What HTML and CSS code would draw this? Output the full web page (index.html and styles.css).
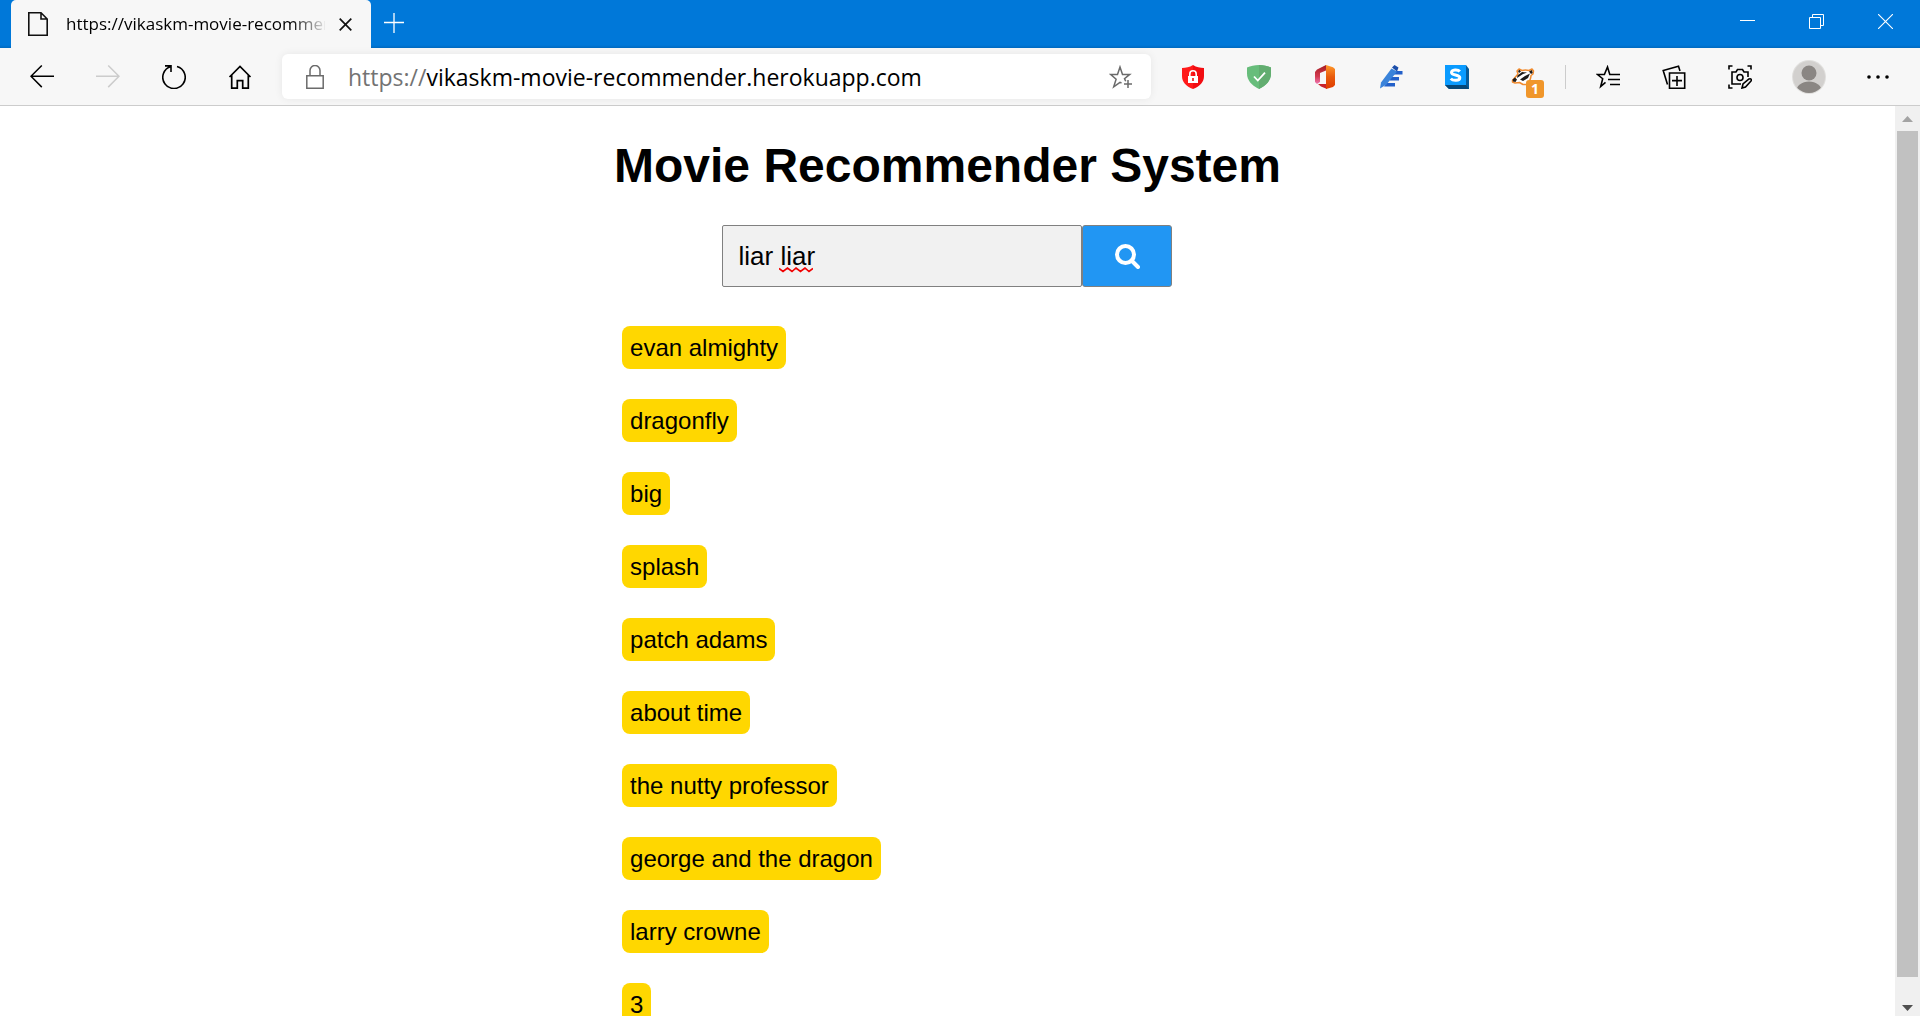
FILE: index.html
```html
<!DOCTYPE html>
<html lang="en">
<head>
<meta charset="utf-8">
<title>Movie Recommender System</title>
<link rel="stylesheet" href="styles.css">
</head>
<body>
<header class="titlebar">
  <div class="tab">
    <svg class="tab-icon" width="20" height="24" viewBox="0 0 20 24" fill="none" stroke="#111" stroke-width="1.6"><path d="M.8.8H13l6.2 6.2v16.2H.8zM13 .8V7h6.2"/></svg>
    <span class="tab-title">https://vikaskm-movie-recommender.herokuapp.com</span>
    <button class="tab-close" aria-label="Close tab"><svg width="13" height="13" viewBox="0 0 13 13" stroke="#111" stroke-width="1.7"><path d="M.7.7l11.6 11.6M12.3.7L.7 12.3"/></svg></button>
  </div>
  <button class="new-tab" aria-label="New tab"><svg width="20" height="20" viewBox="0 0 20 20" stroke="#fff" stroke-width="1.3"><path d="M0 9.5h20M10 0v20"/></svg></button>
  <div class="window-controls">
    <button aria-label="Minimize"><svg width="15" height="15" viewBox="0 0 15 15" stroke="#fff"><path d="M0 6.5h15"/></svg></button>
    <button aria-label="Restore"><svg width="15" height="15" viewBox="0 0 15 15" fill="none" stroke="#fff"><path d="M.5 3.500h11v11H.5zM3.500 3.500v-3h11v11h-3"/></svg></button>
    <button aria-label="Close window"><svg width="15" height="15" viewBox="0 0 15 15" stroke="#fff" stroke-width="1.1"><path d="M0 0l15 15M15 0L0 15"/></svg></button>
  </div>
</header>
<nav class="toolbar" aria-label="Browser">
  <button class="tool" aria-label="Back"><svg width="24" height="24" viewBox="0 0 24 24" fill="none" stroke="#000" stroke-width="1.5"><path d="M1 11.300h23M11.800.5L1 11.300l10.800 10.800"/></svg></button>
  <button class="tool" aria-label="Forward" disabled><svg width="24" height="24" viewBox="0 0 24 24" fill="none" stroke="#ccc" stroke-width="1.500"><path d="M0 11.300h23M12.200.5L23 11.300 12.200 22.100"/></svg></button>
  <button class="tool" aria-label="Reload"><svg width="24" height="24" viewBox="0 0 24 24" fill="none" stroke="#000" stroke-width="1.600"><path d="M15 1.500A11.200 11.200 0 1 1 9 1.500M3 .9h6v6"/></svg></button>
  <button class="tool" aria-label="Home"><svg width="24" height="24" viewBox="0 0 24 24" fill="none" stroke="#000" stroke-width="1.700"><path d="M1.500 12L12 1.500 22.500 12M3.700 10v13.200h5.600v-7.500h5.400v7.500h5.600V10"/></svg></button>
  <div class="address">
    <svg width="18" height="24" viewBox="0 0 18 24" fill="none" stroke="#6b6b6b" stroke-width="1.500"><path d="M.8 10.800h16.400v12.400H.8zM4 10.800V5.500a5 5 0 0 1 10 0v5.300"/></svg>
    <label class="scheme" for="url">https://</label><input id="url" class="url" type="text" value="vikaskm-movie-recommender.herokuapp.com" spellcheck="false">
    <button class="favorite" aria-label="Add to favorites"><svg width="24" height="24" viewBox="0 0 24 24" fill="none" stroke="#6b6b6b" stroke-width="1.500"><path d="M12.500 18L11 17.300l-6.300 4.500 2.400-7.600L1.500 9.400h7L11 2l2.500 7.400h7.200l-5.200 4.200 1.200 2.600M19 15v8M15 19h8"/></svg></button>
  </div>
  <button class="tool" aria-label="Ad blocker"><svg width="24" height="24" viewBox="0 0 24 24"><path fill="#f20d12" d="M12 0c3.500 2.200 7 3 11 3v8c0 6-4 10.500-11 13z"/><path fill="#ff1a1a" d="M12 0C8.500 2.200 5 3 1 3v8c0 6 4 10.500 11 13z"/><rect x="7" y="11" width="10" height="7" fill="#fff"/><path d="M8.800 11V9a3.200 3.200 0 0 1 6.400 0v2" fill="none" stroke="#fff" stroke-width="1.600"/><path d="M12 13v3" stroke="#e11" stroke-width="1.600"/></svg></button>
  <button class="tool" aria-label="Site safety"><svg width="24" height="24" viewBox="0 0 24 24"><path fill="#67bd7b" d="M12 0c4.500 0 8.500 1 12 2.500v6C24 15 19.500 20.500 12 24 4.500 20.500 0 15 0 8.500v-6C3.500 1 7.500 0 12 0z"/><path fill="#62ad70" d="M12 0c4.500 0 8.500 1 12 2.500v6C24 15 19.500 20.500 12 24z"/><path d="M7 11.500l3.800 4L18 7.700" fill="none" stroke="#fff" stroke-width="1.800"/></svg></button>
  <button class="tool" aria-label="Office"><svg width="24" height="24" viewBox="0 0 24 24"><defs><linearGradient id="office-left" x2="0" y2="1"><stop stop-color="#a51d23"/><stop offset=".6" stop-color="#d33a50"/><stop offset="1" stop-color="#ef78b4"/></linearGradient><linearGradient id="office-right" x2="0" y2="1"><stop stop-color="#ff9a2b"/><stop offset=".5" stop-color="#e85a0c"/><stop offset="1" stop-color="#df3b00"/></linearGradient></defs><path fill="url(#office-left)" d="M13 0L4 4.500 2 7v10l2 2 3-2V8l6-2.500z"/><path fill="#c8232c" d="M5 19h9v5L8 21.500z"/><path fill="url(#office-right)" d="M13 0l7 2.200L22 4v16l-2 2-7 2z"/></svg></button>
  <button class="tool" aria-label="Editor"><svg width="24" height="24" viewBox="0 0 24 24"><path fill="#2360c9" d="M14 6h9.500v3.500H13zM11 12h9v3.500h-9zM8 18h8v3.500H5z"/><path fill="#3a83da" d="M12.500 3.500l5.500 3L7.500 19.500l-6.500 4 1-6z"/><path fill="#1b4eaa" d="M13 2.500L15.500 0 19.500 2.500 18 6.500z"/></svg></button>
  <button class="tool" aria-label="Shopping assistant"><svg width="24" height="24" viewBox="0 0 24 24"><path fill="#075b99" d="M21 0l3 4v20H4l-4-4z"/><path fill="#064777" d="M0 20h21l3 4H4z"/><path fill="#0a9bff" d="M0 0h21v20H0z"/><path d="M14.800 6.500C13 4.200 6.500 4.300 6.500 7.500s8.300 1.800 8.300 5.200-7 3.300-9 .9" fill="none" stroke="#fff" stroke-width="3"/></svg></button>
  <button class="tool badger" aria-label="Tracker blocker"><svg width="24" height="24" viewBox="0 0 24 24"><path fill="#fff" stroke="#f18b2e" stroke-width="1.500" stroke-linejoin="round" d="M1.500 15.500L7 9 6 6l2-2 3 1.500c3-.8 5-.5 7 0L21 4l1.500 2L22 9l-2 1.500c0 3-1.500 6-3 9h-5l-3.500-2-4.500.5-2.500-1z"/><path fill="#1d1b19" d="M1.500 14.500L4 12.500l2 2-1.500 2.500-2.500-.5zM6.500 10.500L11 7l5 .5-4 1.500-6 4zM9 14.500l5-3.500 5-2.500-2 4.500-5 3zM7 6l1.500-1.200L10 6.500 8 8zM18 6.500L21 5l.7 3-1.700 1z"/></svg><span class="badge">1</span></button>
  <span class="divider"></span>
  <button class="tool" aria-label="Favorites"><svg width="24" height="24" viewBox="0 0 24 24" fill="none" stroke="#000" stroke-width="1.600"><path d="M9.500 17.300L4.700 21.500l2-7.800L1.500 9.500h6.900L11.500 2l2.300 7.500H24M12 14.500h12M14 19.500h10"/></svg></button>
  <button class="tool" aria-label="Collections"><svg width="24" height="24" viewBox="0 0 24 24" fill="none" stroke="#000" stroke-width="1.600"><path d="M7.500 8h15.200v15.200H7.500zM15 11v10M10 15.600h10M5.500 19.500L1.200 5.500 16.500 1.200 18 6"/></svg></button>
  <button class="tool" aria-label="Web capture"><svg width="24" height="24" viewBox="0 0 24 24" fill="none" stroke="#000" stroke-width="1.600"><path d="M1 4.500V1h3.500M19.500 1H23v3.500M4.500 23H1v-3.500M13 19H4V7h4l1.500-2.500h5L16 7h4v5"/><circle cx="12" cy="12.500" r="3"/><path d="M14 23l1-4 6-5c2-1 3 1 2 2l-5.500 6z"/></svg></button>
  <button class="tool profile" aria-label="Profile"><svg width="34" height="34" viewBox="0 0 34 34"><clipPath id="avatar-clip"><circle cx="17" cy="17" r="16"/></clipPath><circle cx="17" cy="17" r="17" fill="#e0dfdd"/><circle cx="17" cy="17" r="16" fill="#d2d0ce"/><g fill="#8a8683" clip-path="url(#avatar-clip)"><circle cx="17" cy="13" r="7.500"/><ellipse cx="17" cy="32" rx="13" ry="10.500"/></g></svg></button>
  <button class="tool" aria-label="Settings and more"><svg width="24" height="24" viewBox="0 0 24 24"><circle cx="3" cy="12" r="1.800"/><circle cx="12" cy="12" r="1.800"/><circle cx="21" cy="12" r="1.800"/></svg></button>
</nav>
<div class="viewport">
  <main class="page">
    <div class="column">
      <h1>Movie Recommender System</h1>
      <form class="search">
        <input class="query" type="text" value="liar liar" aria-label="Movie name" spellcheck="false">
        <svg class="squiggle" width="34" height="6" viewBox="0 0 34 6" fill="none" stroke="#f00000" stroke-width="1.600"><path d="M0 1.500l4 3 4.500-3.500 4.500 3.500L17 1l4.500 3.500L26 1l4 3.500 4-3"/></svg>
        <button class="submit" type="button" aria-label="Search"><svg width="25" height="25" viewBox="0 0 25 25" fill="none" stroke="#fff" stroke-width="4"><circle cx="10.500" cy="10.500" r="8.500"/><path d="M17 17l6 6" stroke-linecap="round"/></svg></button>
      </form>
      <ul class="results">
        <li>evan almighty</li>
        <li>dragonfly</li>
        <li>big</li>
        <li>splash</li>
        <li>patch adams</li>
        <li>about time</li>
        <li>the nutty professor</li>
        <li>george and the dragon</li>
        <li>larry crowne</li>
        <li>3</li>
      </ul>
    </div>
  </main>
  <div class="scrollbar" aria-hidden="true">
    <svg width="11" height="6" viewBox="0 0 11 6" fill="#a3a3a3"><path d="M0 6L5.500 0 11 6z"/></svg>
    <span class="thumb"></span>
    <svg width="11" height="6" viewBox="0 0 11 6" fill="#505050"><path d="M0 0h11L5.500 6z"/></svg>
  </div>
</div>
</body>
</html>
```
FILE: styles.css
```css
* { box-sizing: border-box; }
body {
  margin: 0;
  height: 100vh;
  display: flex;
  flex-direction: column;
  overflow: hidden;
  background: #fff;
  color: #000;
  font-family: "Liberation Sans", Arial, sans-serif;
}
button {
  padding: 0;
  border: 0;
  background: none;
  display: flex;
  align-items: center;
  justify-content: center;
}
svg { display: block; flex: none; }

.titlebar {
  flex: none;
  height: 48px;
  padding-left: 11px;
  display: flex;
  background: linear-gradient(#0078d9 45px, #006ac0);
}
.tab {
  width: 360px;
  padding: 0 19px 0 17px;
  display: flex;
  align-items: center;
  background: #f7f7f7;
  border-radius: 5px 5px 0 0;
}
.tab-title {
  flex: 1;
  margin: 0 14px 0 18px;
  overflow: hidden;
  white-space: nowrap;
  font: 17px/24px "Open Sans", sans-serif;
  -webkit-mask-image: linear-gradient(to right, #000 225px, transparent 262px);
  mask-image: linear-gradient(to right, #000 225px, transparent 262px);
}
.new-tab { width: 46px; padding-bottom: 2px; }
.window-controls {
  margin-left: auto;
  display: flex;
}
.window-controls button { width: 69px; padding-bottom: 5px; }

.toolbar {
  flex: none;
  height: 58px;
  padding: 0 9px;
  display: flex;
  align-items: center;
  background: #f7f7f7;
  border-bottom: 1px solid #ccc;
}
.tool { flex: none; width: 66px; height: 48px; }
.tool.profile { width: 72px; }
.address {
  flex: 1;
  min-width: 0;
  height: 45px;
  margin: 0 9px;
  padding: 0 18px 0 24px;
  display: flex;
  align-items: center;
  background: #fff;
  border-radius: 6px;
  box-shadow: 0 0 8px rgba(0, 0, 0, .07);
}
.scheme, .url {
  font: 23px/32px "Open Sans", sans-serif;
}
.scheme { margin-left: 24px; color: #737373; }
.url {
  flex: 1;
  min-width: 0;
  padding: 0;
  border: 0;
  outline: 0;
  background: none;
  color: #000;
}
.badger { position: relative; }
.badge {
  position: absolute;
  left: 36px;
  top: 27px;
  width: 18px;
  height: 18px;
  border-radius: 3px;
  background: #f0962a;
  color: #fff;
  font: bold 14px/18px "Open Sans", sans-serif;
}
.divider {
  flex: none;
  width: 1px;
  height: 24px;
  margin: 0 9px;
  background: #ccc;
}

.viewport {
  flex: 1;
  min-height: 0;
  display: flex;
}
.page {
  flex: 1;
  overflow: hidden;
  display: flex;
  justify-content: center;
}
.column { padding-top: 31px; }
h1 {
  margin: 0;
  font-size: 48px;
  line-height: 58px;
}
.search {
  position: relative;
  width: 450px;
  height: 62px;
  margin: 30px auto 39px;
  display: flex;
}
.query {
  width: 360px;
  padding: 0 15px;
  border: 1px solid #808080;
  border-radius: 2px;
  background: #f1f1f1;
  color: #000;
  font: 26px "Liberation Sans", Arial, sans-serif;
}
.squiggle {
  position: absolute;
  left: 57px;
  top: 42px;
}
.submit {
  flex: 1;
  border: 1px solid #808080;
  border-radius: 3px;
  background: #2196f3;
}
.results {
  margin: 0;
  padding: 0 8px;
  display: flex;
  flex-direction: column;
  align-items: flex-start;
  gap: 30px;
  list-style: none;
}
.results li {
  padding: 8px;
  border-radius: 8px;
  background: gold;
  font-size: 24px;
  line-height: 27px;
}
.scrollbar {
  flex: none;
  width: 25px;
  padding: 10px 0 5px;
  display: flex;
  flex-direction: column;
  align-items: center;
  background: #f0f0f0;
}
.thumb {
  flex: 1;
  width: 21px;
  margin: 9px 0 28px;
  background: #c1c1c1;
}
```
